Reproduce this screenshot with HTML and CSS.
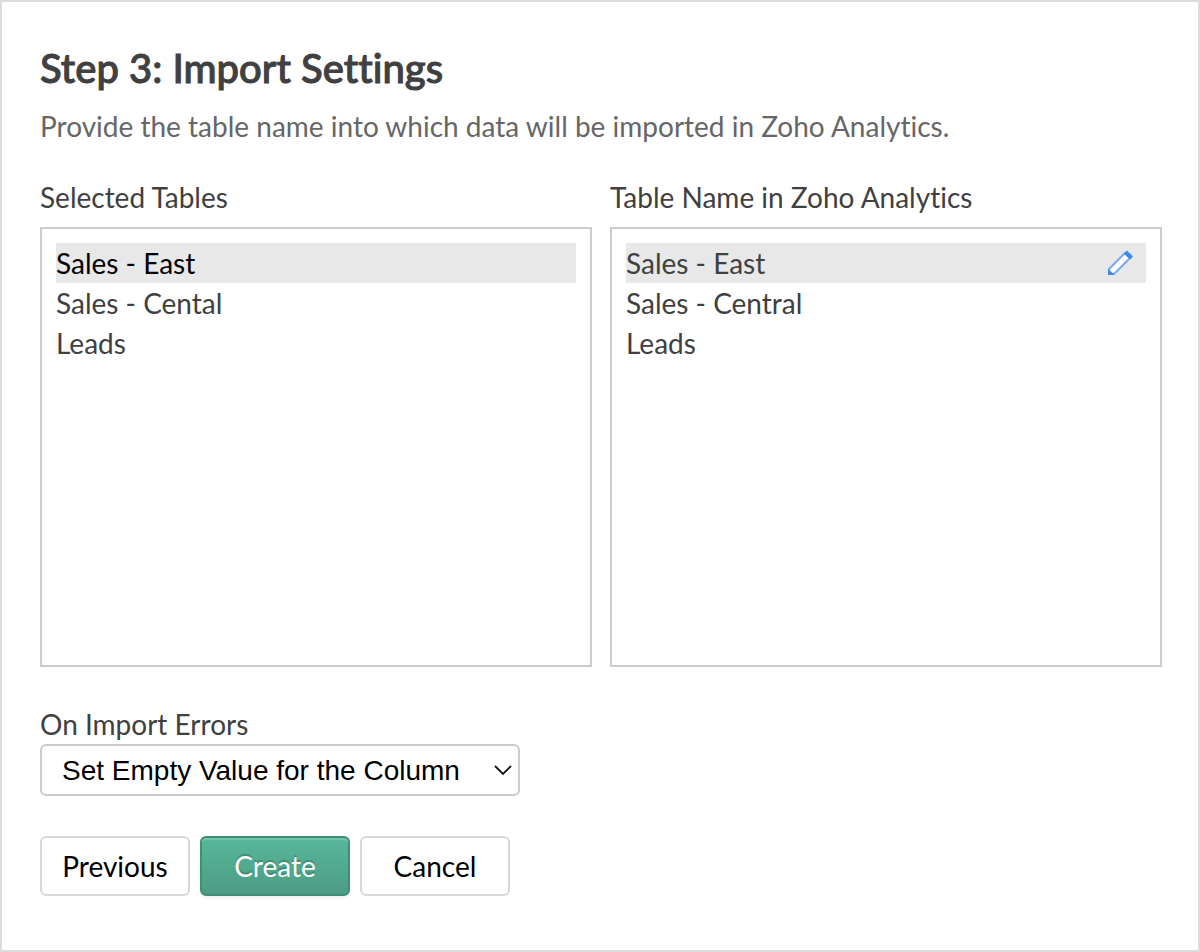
FILE: index.html
```html
<!DOCTYPE html>
<html lang="en">
<head>
<meta charset="utf-8">
<title>Import Settings</title>
<link rel="stylesheet" href="styles.css">
</head>
<body>
<main class="dialog">
  <h1 class="title">Step 3: Import Settings</h1>
  <p class="intro">Provide the table name into which data will be imported in Zoho Analytics.</p>
  <form class="form">
    <div class="columns">
      <section class="column">
        <h2 class="label">Selected Tables</h2>
        <ul class="list">
          <li class="item item-active item-source">Sales - East</li>
          <li class="item">Sales - Cental</li>
          <li class="item">Leads</li>
        </ul>
      </section>
      <section class="column">
        <h2 class="label">Table Name in Zoho Analytics</h2>
        <ul class="list">
          <li class="item item-active">Sales - East
            <button class="edit" type="button" aria-label="Edit table name">
              <svg width="28" height="28" viewBox="0 0 28 28">
                <path d="M3 20L19 4l5 5L8 25H3z" fill="#fff" stroke="#76a8fa" stroke-width="2"/>
                <path d="M2 19.500L8.500 26H2zM18 4.500L21 1.500l6 6-3 3z" fill="#3f86f7"/>
              </svg>
            </button>
          </li>
          <li class="item">Sales - Central</li>
          <li class="item">Leads</li>
        </ul>
      </section>
    </div>
    <div class="field">
      <label class="field-label" for="errors">On Import Errors</label>
      <div class="select-wrap">
        <select class="select" id="errors"><option>Set Empty Value for the Column</option></select>
        <svg class="chevron" width="18" height="12" viewBox="0 0 18 12" fill="none" stroke="#111" stroke-width="1.800"><path d="M1 2l8 8 8-8"/></svg>
      </div>
    </div>
    <div class="actions">
      <button class="button" type="button">Previous</button>
      <button class="button button-primary" type="submit">Create</button>
      <button class="button" type="button">Cancel</button>
    </div>
  </form>
</main>
</body>
</html>
```

FILE: styles.css
```css
* { box-sizing: border-box; }
body { margin: 0; background: #fff; color: #404040; font: 28px/40px Lato, sans-serif; font-variant-ligatures: none; }
.dialog { min-height: 100vh; padding: 40px 36px 40px 38px; border: 2px solid #dcdcdc; }
.title { margin: 0; font-size: 40px; line-height: 52px; font-weight: 500; -webkit-text-stroke: 1px #404040; }
.intro { margin: 12px 0 0; color: #666; }
.columns { display: grid; grid-template-columns: 1fr 1fr; gap: 18px; margin-top: 31px; }
.label { margin: 0 0 10px; font-size: 28px; line-height: 40px; font-weight: 400; }
.list { min-height: 440px; margin: 0; padding: 14px; border: 2px solid #ccc; list-style: none; }
.item { display: flex; justify-content: space-between; align-items: center; min-height: 40px; }
.item-active { background: #e8e8e8; }
.item-source { color: #000; }
.edit { display: flex; margin: 0 12px 0 0; padding: 0; border: 0; background: none; }
.field { margin-top: 37px; }
.field-label { display: block; }
.select-wrap { position: relative; width: 480px; max-width: 100%; }
.select { display: block; width: 100%; height: 52px; padding: 0 44px 0 20px; border: 2px solid #ccc; border-radius: 6px; background: #fff; color: #000; font: 28px "Liberation Sans", Arial, sans-serif; appearance: none; }
.chevron { position: absolute; right: 8px; top: 20px; pointer-events: none; }
.actions { display: flex; flex-wrap: wrap; gap: 10px; margin-top: 40px; }
.button { width: 150px; height: 60px; padding: 0; border: 2px solid #d8d8d8; border-radius: 6px; background: #fff; color: #000; font: 28px/40px Lato, sans-serif; }
.button-primary { border-color: #3f8f78; background: linear-gradient(#58b899, #4c9c84); color: #fff; text-shadow: 0 -2px 1px #3f8a73; box-shadow: inset 0 2px #74c4aa, 0 2px 4px #0001; }
```
